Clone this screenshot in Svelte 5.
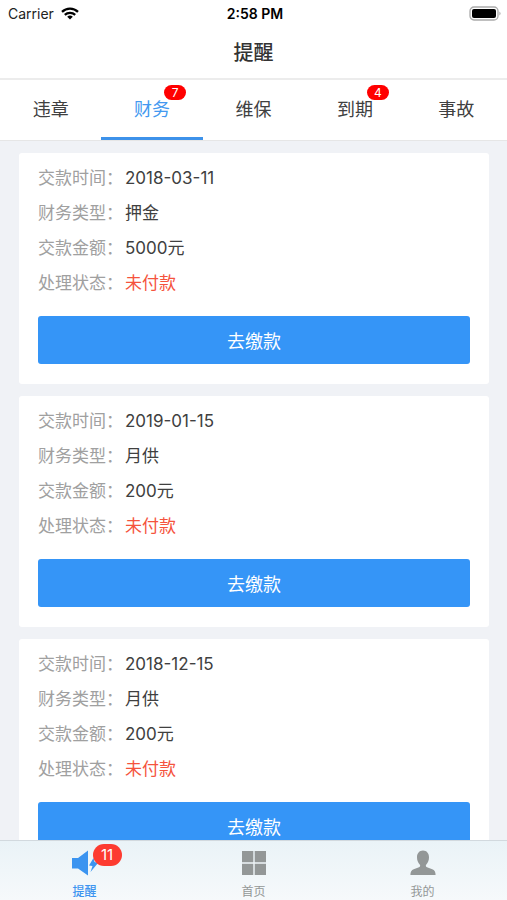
<script>
  const tabs = [
    { label: '违章' },
    { label: '财务', count: 7 },
    { label: '维保' },
    { label: '到期', count: 4 },
    { label: '事故' }
  ];

  const payments = [
    { date: '2018-03-11', type: '押金', amount: 5000, status: '未付款' },
    { date: '2019-01-15', type: '月供', amount: 200, status: '未付款' },
    { date: '2018-12-15', type: '月供', amount: 200, status: '未付款' }
  ];

  let active = $state('财务');
</script>

<svelte:head>
  <title>提醒</title>
</svelte:head>

<div class="screen">
  <div class="status-bar">
    <div class="carrier">
      <span>Carrier</span>
      <svg width="18" height="13" viewBox="0 0 18 13" aria-hidden="true">
        <path d="M1 4.800a11.600 11.600 0 0 1 16 0" fill="none" stroke="#000" stroke-width="2.3" />
        <path d="M3.8 7.900a7.500 7.500 0 0 1 10.400 0" fill="none" stroke="#000" stroke-width="2.2" />
        <path d="M9 12.600 6.200 9.800a4 4 0 0 1 5.600 0z" />
      </svg>
    </div>
    <time>2:58 PM</time>
    <svg class="battery" width="33" height="16" viewBox="0 0 33 16" aria-hidden="true">
      <rect x="1" y="1" width="28" height="13" rx="4" fill="#fff" stroke="#aaa" stroke-width="1.3" />
      <rect x="3" y="3" width="24" height="9" rx="2" />
      <path d="M30.5 5.500q2 2 0 4z" fill="#999" />
    </svg>
  </div>

  <header><h1>提醒</h1></header>

  <nav class="tabs" aria-label="提醒">
    {#each tabs as tab}
      <button class="tab" class:active={active === tab.label} onclick={() => (active = tab.label)}>
        <span class="tab-label">{tab.label}{#if tab.count}<span class="count">{tab.count}</span>{/if}</span>
      </button>
    {/each}
  </nav>

  <main>
    {#each payments as payment}
      <article class="card">
        <dl>
          <div class="row"><dt>交款时间：</dt><dd>{payment.date}</dd></div>
          <div class="row"><dt>财务类型：</dt><dd>{payment.type}</dd></div>
          <div class="row"><dt>交款金额：</dt><dd>{payment.amount}元</dd></div>
          <div class="row"><dt>处理状态：</dt><dd class="unpaid">{payment.status}</dd></div>
        </dl>
        <button class="pay">去缴款</button>
      </article>
    {/each}
  </main>

  <nav class="bottom-bar" aria-label="主导航">
    <a class="current" href="#remind" aria-current="page">
      <span class="icon">
        <svg width="28" height="26" viewBox="0 0 28 26" aria-hidden="true">
          <path d="M1 8h6l10-7.500v25L7 18.500H1zM22.500 8 18 15.500l3.500.5-2 6L27 13l-3.500-1z" fill="currentColor" />
        </svg>
        <span class="unread">11</span>
      </span>
      <span>提醒</span>
    </a>
    <a href="#home">
      <span class="icon">
        <svg width="26" height="26" viewBox="0 0 26 26" aria-hidden="true">
          <path d="M1 1h11.300v11.300H1zM13.700 1H25v11.300H13.700zM1 13.700h11.300V25H1zM13.700 13.700H25V25H13.700z" fill="currentColor" />
        </svg>
      </span>
      <span>首页</span>
    </a>
    <a href="#mine">
      <span class="icon">
        <svg width="26" height="26" viewBox="0 0 26 26" aria-hidden="true">
          <path d="M13 .5c3.700 0 6 2.800 6 6.800 0 3-1 5.400-2.700 7.200-.8 1-.6 2.300.7 2.800l5.300 2c2.200.9 3.300 2.700 3.300 5.700H.4c0-3 1.100-4.800 3.300-5.700l5.300-2c1.300-.5 1.500-1.800.7-2.800C8 12.700 7 10.300 7 7.300 7 3.300 9.300.5 13 .5z" fill="currentColor" />
        </svg>
      </span>
      <span>我的</span>
    </a>
  </nav>
</div>

<style>
  :global(*) { box-sizing: border-box; }
  :global(body) { margin: 0; background: #f0f2f6; color: #404040; font-family: Inter, "Noto Sans CJK SC", sans-serif; }
  button { background: none; border: 0; color: inherit; cursor: pointer; font: inherit; padding: 0; }
  .screen { display: flex; flex-direction: column; height: 100vh; }
  .status-bar { align-items: center; background: #fff; color: #222; display: grid; flex: none; font-size: 14px; grid-template-columns: 1fr auto 1fr; height: 27px; padding: 0 5px 0 8px; }
  .carrier { align-items: center; display: flex; gap: 7px; }
  .status-bar time { color: #000; font-weight: 600; }
  .battery { justify-self: end; }
  header { align-items: center; background: #fff; border-bottom: 2px solid #ececec; display: flex; flex: none; height: 53px; justify-content: center; }
  h1 { color: #333; font-size: 20px; font-weight: 500; line-height: 28px; margin: 0; }
  .tabs { background: #fff; border-bottom: 1px solid #e6e6e6; display: flex; flex: none; height: 61px; }
  .tab { border-bottom: 3px solid transparent; flex: 1; font-size: 18px; padding-bottom: 2px; }
  .tab.active { border-bottom-color: #3d92ea; color: #4399f0; }
  .tab-label { position: relative; }
  .count { background: #f00; border-radius: 8px; color: #fff; font-size: 12px; height: 15px; left: 30px; line-height: 15px; position: absolute; top: -14px; width: 22px; }
  main { flex: 1; min-height: 0; overflow-y: auto; padding: 12px 18px 12px 19px; scrollbar-width: none; }
  .card { background: #fff; border-radius: 3px; margin-bottom: 12px; padding: 8px 19px 20px; }
  dl { margin: 0 0 15px; }
  .row { display: flex; font-size: 17px; line-height: 35px; }
  dt { color: #a0a0a0; min-width: 87px; }
  dd { margin: 0; }
  .unpaid { color: #f5533d; }
  .pay { background: #3595f7; border-radius: 3px; color: #fff; display: block; font-size: 18px; height: 48px; padding-bottom: 1px; width: 100%; }
  .bottom-bar { background: linear-gradient(#eaf3f7, #f6f9fb); border-top: 1px solid #d2d9de; display: flex; flex: none; height: 60px; }
  .bottom-bar a { align-items: center; color: #939797; display: flex; flex: 1; flex-direction: column; font-size: 12px; gap: 7px; line-height: 18px; padding-top: 9px; text-decoration: none; }
  .bottom-bar a.current { color: #3b94f0; font-weight: 500; }
  .icon { display: block; height: 26px; position: relative; }
  .unread { background: #fd3b30; border-radius: 11px; color: #fff; font-size: 15px; font-weight: 400; height: 22px; left: 22px; line-height: 22px; position: absolute; text-align: center; top: -6px; width: 29px; }
</style>
